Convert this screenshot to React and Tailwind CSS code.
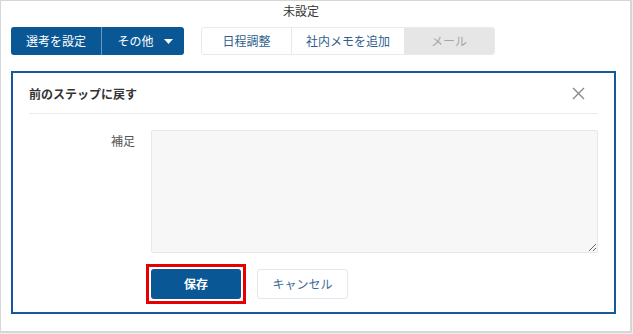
import React from 'react'

const font = { fontFamily: '"Noto Sans CJK JP", "Noto Sans", sans-serif' }

function Toolbar() {
  return (
    <div className="flex items-center gap-[17px]">
      <div className="flex h-[28px] rounded-[3px] bg-[#0a5796] text-white text-[12px]">
        <button className="w-[90px] h-full flex items-center justify-center">選考を設定</button>
        <div className="w-px bg-[#6f97bd]" />
        <button className="w-[82px] h-full flex items-center justify-center gap-[10px] pl-[4px]">
          その他
          <svg width="9" height="5" viewBox="0 0 9 5">
            <path d="M0 0h9L4.5 5z" fill="#fff" />
          </svg>
        </button>
      </div>
      <div className="flex h-[28px] rounded-[3px] border border-[#e6e9ee] text-[12px] text-[#2f5f8f] overflow-hidden">
        <button className="w-[89px] flex items-center justify-center">日程調整</button>
        <div className="w-px bg-[#e6e9ee]" />
        <button className="w-[112px] flex items-center justify-center">社内メモを追加</button>
        <button className="w-[90px] flex items-center justify-center bg-[#e6e6e6] text-[#a6a6a6]">メール</button>
      </div>
    </div>
  )
}

function Panel() {
  return (
    <div className="mt-[16px] w-[605px] h-[243px] border-2 border-[#14599a] bg-white px-[16px]">
      <div className="h-[41px] flex items-center justify-between border-b border-[#ebebeb]">
        <span className="text-[12px] font-bold text-[#333] pt-[1px]">前のステップに戻す</span>
        <svg width="13" height="13" viewBox="0 0 13 13" className="mr-[13px]">
          <path d="M1 1l11 11M12 1L1 12" stroke="#8a8a8a" strokeWidth="1.4" />
        </svg>
      </div>
      <div className="flex mt-[16px]">
        <div className="w-[106px] text-right text-[12px] text-[#555] pt-[2px]">補足</div>
        <textarea className="ml-[16px] w-[447px] h-[123px] bg-[#f7f7f7] border border-[#e8e8e8] rounded-[2px] outline-none" />
      </div>
      <div className="flex items-center mt-[11px] pl-[117px] gap-[11px]">
        <div className="border-[3px] border-[#e60000] p-[2px]">
          <button className="block w-[90px] h-[30px] rounded-[3px] bg-[#0a5796] text-white text-[12px] font-bold">
            保存
          </button>
        </div>
        <button className="w-[91px] h-[30px] rounded-[3px] border border-[#e3e8ee] bg-white text-[12px] text-[#3d6b98]">
          キャンセル
        </button>
      </div>
    </div>
  )
}

export default function App() {
  return (
    <div className="w-[633px] h-[334px] bg-[#eeeeee]" style={font}>
      <div className="w-[632px] h-[333px] border border-[#d6d6d6] border-r-[2px] border-b-[2px] bg-white pl-[10px]">
        <div className="h-[26px] pl-[272px] pt-[2px] text-[12px] text-[#333] leading-[16px]">未設定</div>
        <Toolbar />
        <Panel />
      </div>
    </div>
  )
}
